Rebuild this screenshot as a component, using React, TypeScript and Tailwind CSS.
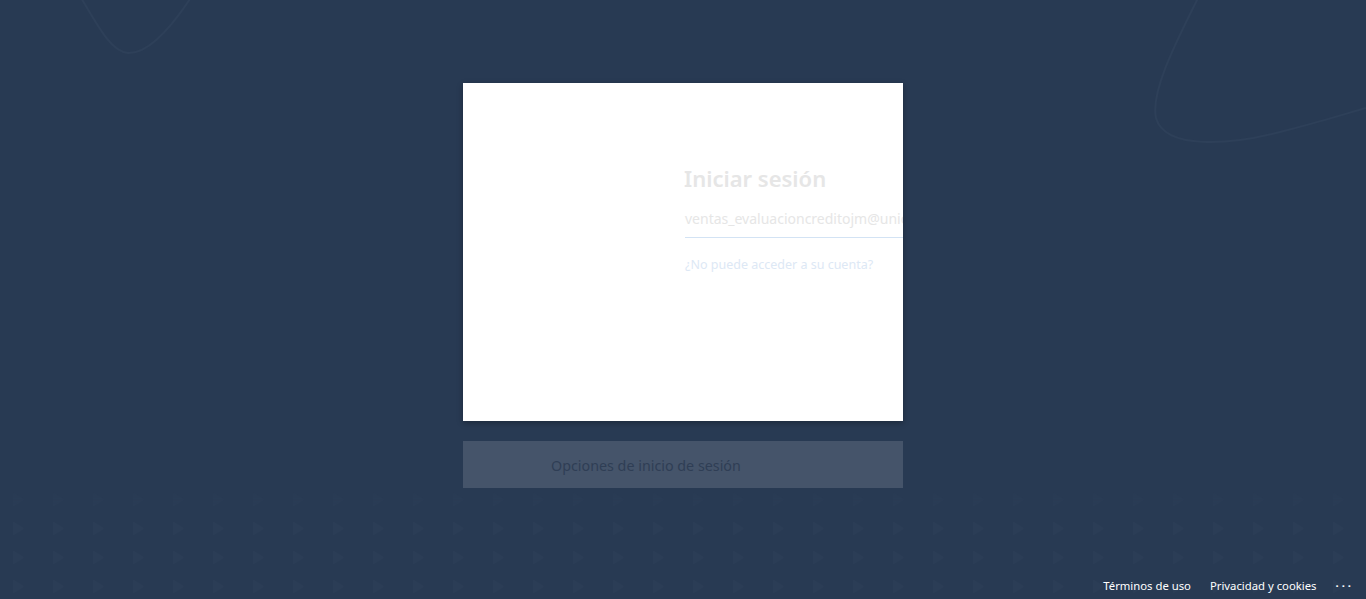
import React from 'react';

function Backdrop() {
  return (
    <svg className="absolute inset-0 w-full h-full pointer-events-none" viewBox="0 0 1366 599" preserveAspectRatio="none">
      <defs>
        <pattern id="tri" x="10" y="492" width="40" height="29" patternUnits="userSpaceOnUse">
          <path d="M3 1.5 Q3 0.5 4 1 L13 6.5 Q14 7.5 13 8.5 L4 14 Q3 14.5 3 13.5 Z" fill="#2b3d56" />
        </pattern>
        <linearGradient id="fade" x1="0" y1="0" x2="0" y2="1">
          <stop offset="0" stopColor="#fff" stopOpacity="0" />
          <stop offset="0.3" stopColor="#fff" stopOpacity="1" />
        </linearGradient>
        <mask id="m">
          <rect x="0" y="480" width="1366" height="119" fill="url(#fade)" />
        </mask>
      </defs>
      <rect x="0" y="480" width="1366" height="119" fill="url(#tri)" mask="url(#m)" />
      <path d="M80 -4 C 100 30, 112 52, 128 53 C 150 54, 175 22, 192 -4" fill="none" stroke="#2e4059" strokeWidth="2" />
      <path d="M1199 -4 C 1180 35, 1150 90, 1156 118 C 1165 150, 1230 145, 1280 132 C 1320 122, 1345 114, 1366 108" fill="none" stroke="#2e4059" strokeWidth="2" />
    </svg>
  );
}

export default function App() {
  return (
    <div className="relative w-full h-[599px] overflow-hidden bg-[#283a53] font-['Noto_Sans',sans-serif]">
      <Backdrop />
      <div className="relative flex flex-col items-center h-full pt-[83px]">
        {/* Tarjeta */}
        <div className="w-[440px] h-[338px] bg-white shadow-[0_2px_6px_rgba(0,0,0,0.3)] overflow-hidden">
          <div className="pl-[221px] pt-[80px] w-[700px]">
            <h1 className="text-[22px] leading-[30px] font-semibold text-[#e6e6e6]">Iniciar sesión</h1>
            <div className="mt-[16px] ml-[1px] border-b border-[#d3e3f4] pb-[8px] text-[14px] leading-[20px] text-[#e6e6e6] whitespace-nowrap">
              ventas_evaluacioncreditojm@unicomer.com
            </div>
            <div className="mt-[18px] pl-[1px] text-[12.5px] leading-[18px] text-[#dde8f5]">¿No puede acceder a su cuenta?</div>
          </div>
        </div>

        {/* Opciones */}
        <div className="mt-[20px] w-[440px] h-[47px] bg-[#45546a] flex items-center pl-[88px]">
          <span className="text-[14.3px] leading-[20px] pt-[2px] text-[#2f3e55]">Opciones de inicio de sesión</span>
        </div>

        {/* Pie */}
        <div className="mt-auto self-end flex items-center gap-[19px] pr-[12px] pb-[4px] text-[11.3px] text-white">
          <span>Términos de uso</span>
          <span>Privacidad y cookies</span>
          <span className="tracking-[3px] font-bold">···</span>
        </div>
      </div>
    </div>
  );
}
